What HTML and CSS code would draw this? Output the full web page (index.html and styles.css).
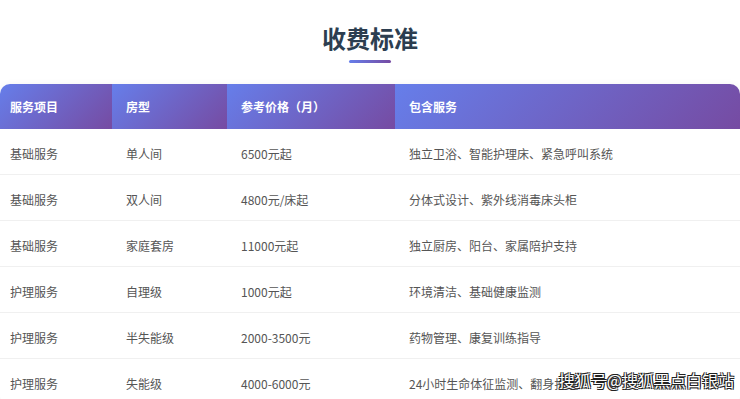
FILE: index.html
```html
<!DOCTYPE html>
<html lang="zh-CN">
<head>
    <meta charset="UTF-8">
    <meta name="viewport" content="width=device-width, initial-scale=1.0">
    <title>收费标准</title>
    <link rel="stylesheet" href="styles.css">
</head>
<body>
    <div class="section">
        <h2 class="section-title">收费标准</h2>
        <div class="title-bar"></div>

        <div class="table-wrap">
            <table class="price-table">
                <colgroup>
                    <col class="col-type">
                    <col class="col-room">
                    <col class="col-price">
                    <col>
                </colgroup>
                <thead>
                    <tr>
                        <th>服务项目</th>
                        <th>房型</th>
                        <th>参考价格（月）</th>
                        <th>包含服务</th>
                    </tr>
                </thead>
                <tbody>
                    <tr>
                        <td>基础服务</td>
                        <td>单人间</td>
                        <td>6500元起</td>
                        <td>独立卫浴、智能护理床、紧急呼叫系统</td>
                    </tr>
                    <tr>
                        <td>基础服务</td>
                        <td>双人间</td>
                        <td>4800元/床起</td>
                        <td>分体式设计、紫外线消毒床头柜</td>
                    </tr>
                    <tr>
                        <td>基础服务</td>
                        <td>家庭套房</td>
                        <td>11000元起</td>
                        <td>独立厨房、阳台、家属陪护支持</td>
                    </tr>
                    <tr>
                        <td>护理服务</td>
                        <td>自理级</td>
                        <td>1000元起</td>
                        <td>环境清洁、基础健康监测</td>
                    </tr>
                    <tr>
                        <td>护理服务</td>
                        <td>半失能级</td>
                        <td>2000-3500元</td>
                        <td>药物管理、康复训练指导</td>
                    </tr>
                    <tr>
                        <td>护理服务</td>
                        <td>失能级</td>
                        <td>4000-6000元</td>
                        <td>24小时生命体征监测、翻身护理</td>
                    </tr>
                </tbody>
            </table>
        </div>
    </div>

    <div class="watermark">搜狐号@搜狐黑点白银站</div>
</body>
</html>
```

FILE: styles.css
```css
body {
    font-family: "Noto Sans CJK SC", "Noto Sans", sans-serif;
    margin: 0;
    padding: 0;
    background-color: #fff;
    overflow: hidden;
}

.section {
    padding-top: 21px;
}

.section-title {
    margin: 0;
    text-align: center;
    font-size: 24px;
    line-height: 34px;
    font-weight: bold;
    color: #2c3e50;
}

.title-bar {
    width: 42px;
    height: 3px;
    margin: 5px auto 0;
    border-radius: 2px;
    background: linear-gradient(90deg, #667eea, #764ba2);
}

.table-wrap {
    margin-top: 21px;
    border-radius: 10px;
    overflow: hidden;
    box-shadow: 0 2px 8px rgba(0, 0, 0, 0.08);
}

.price-table {
    width: 100%;
    border-collapse: collapse;
    table-layout: fixed;
}

.col-type {
    width: 112px;
}

.col-room {
    width: 115px;
}

.col-price {
    width: 168px;
}

.price-table th {
    height: 45px;
    padding: 0 14px;
    text-align: left;
    font-size: 12px;
    font-weight: bold;
    color: #fff;
    background: linear-gradient(135deg, #667eea 0%, #764ba2 100%);
}

.price-table td {
    height: 42px;
    padding: 3px 14px 0;
    font-size: 12px;
    color: #555;
    border-bottom: 1px solid #f0f0f0;
    background-color: #fff;
}

.price-table th:first-child,
.price-table td:first-child {
    padding-left: 10px;
}

.watermark {
    position: absolute;
    right: 6px;
    bottom: 7px;
    font-size: 16px;
    color: #fff;
    text-shadow: -1px -1px 0 #222, 1px -1px 0 #222, -1px 1px 0 #222, 1px 1px 0 #222;
}
```
